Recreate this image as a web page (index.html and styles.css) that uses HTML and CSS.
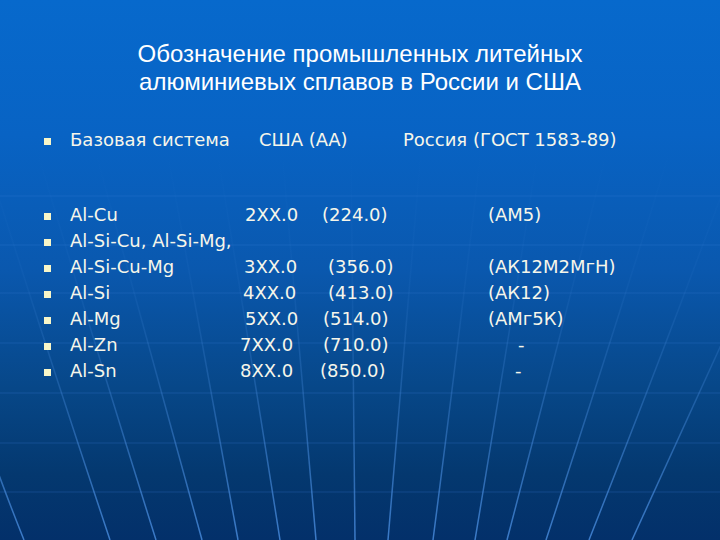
FILE: index.html
```html
<!DOCTYPE html>
<html lang="ru">
<head>
<meta charset="utf-8">
<title>Обозначение промышленных литейных алюминиевых сплавов</title>
<link rel="stylesheet" href="styles.css">
</head>
<body>
<div class="slide">
  <svg class="bg" width="720" height="540" viewBox="0 0 720 540" aria-hidden="true">
    <defs>
      <linearGradient id="fade" gradientUnits="userSpaceOnUse" x1="0" y1="150" x2="0" y2="540">
        <stop offset="0" stop-color="#4a8ee0" stop-opacity="0"/>
        <stop offset="0.35" stop-color="#4a8ee0" stop-opacity="0.08"/>
        <stop offset="0.6" stop-color="#4a8ee0" stop-opacity="0.3"/>
        <stop offset="1" stop-color="#4a8ee0" stop-opacity="0.8"/>
      </linearGradient>
    </defs>
    <g class="hlines">
      <line x1="0" y1="196" x2="720" y2="196"/>
      <line x1="0" y1="245" x2="720" y2="245"/>
      <line x1="0" y1="293" x2="720" y2="293"/>
      <line x1="0" y1="343" x2="720" y2="343"/>
      <line x1="0" y1="393" x2="720" y2="393"/>
      <line x1="0" y1="443" x2="720" y2="443"/>
      <line x1="0" y1="492" x2="720" y2="492"/>
    </g>
    <g class="vlines" stroke="url(#fade)">
      <path d="M-92 150 Q-60 330 24 540"/>
      <path d="M-16 150 Q40 330 110 540"/>
      <path d="M37 150 Q90 330 156 540"/>
      <path d="M95 150 Q145 330 202 540"/>
      <path d="M167 150 Q200 330 238 540"/>
      <path d="M217 150 Q247 330 280 540"/>
      <path d="M282 150 Q298 330 316 540"/>
      <path d="M351 150 Q353 330 355 540"/>
      <path d="M421 150 Q406 330 388 540"/>
      <path d="M481 150 Q460 330 433 540"/>
      <path d="M538 150 Q510 330 475 540"/>
      <path d="M607 150 Q562 330 507 540"/>
      <path d="M670 150 Q615 330 546 540"/>
      <path d="M738 150 Q672 330 589 540"/>
      <path d="M810 150 Q728 330 632 540"/>
    </g>
  </svg>

  <div class="content">
    <h1 class="title">Обозначение промышленных литейных<br>алюминиевых сплавов в России и США</h1>

    <div class="list">
      <div class="row">
        <span class="mark"><i class="sq"></i></span>
        <span class="h1c">Базовая система</span>
        <span class="h2c">США (АА)</span>
        <span class="h3c">Россия (ГОСТ 1583-89)</span>
      </div>

      <div class="group">
        <div class="row">
          <span class="mark"><i class="sq"></i></span>
          <span class="name">Al-Cu</span>
          <span class="code c5">2XX.0</span>
          <span class="aa q2">(224.0)</span>
          <span class="ru">(АМ5)</span>
        </div>
        <div class="row">
          <span class="mark"><i class="sq"></i></span>
          <span class="name wide">Al-Si-Cu, Al-Si-Mg,</span>
        </div>
        <div class="row">
          <span class="mark"><i class="sq"></i></span>
          <span class="name">Al-Si-Cu-Mg</span>
          <span class="code c4">3XX.0</span>
          <span class="aa q8">(356.0)</span>
          <span class="ru">(АК12М2МгН)</span>
        </div>
        <div class="row">
          <span class="mark"><i class="sq"></i></span>
          <span class="name">Al-Si</span>
          <span class="code c3">4XX.0</span>
          <span class="aa q8">(413.0)</span>
          <span class="ru">(АК12)</span>
        </div>
        <div class="row">
          <span class="mark"><i class="sq"></i></span>
          <span class="name">Al-Mg</span>
          <span class="code c5">5XX.0</span>
          <span class="aa q3">(514.0)</span>
          <span class="ru">(АМг5К)</span>
        </div>
        <div class="row">
          <span class="mark"><i class="sq"></i></span>
          <span class="name">Al-Zn</span>
          <span class="code c0">7XX.0</span>
          <span class="aa q3">(710.0)</span>
          <span class="ru dash1">-</span>
        </div>
        <div class="row">
          <span class="mark"><i class="sq"></i></span>
          <span class="name">Al-Sn</span>
          <span class="code c0">8XX.0</span>
          <span class="aa q0">(850.0)</span>
          <span class="ru dash2">-</span>
        </div>
      </div>
    </div>
  </div>
</div>
</body>
</html>
```

FILE: styles.css
```css
* { box-sizing: border-box; }

html, body {
  margin: 0;
  padding: 0;
  background: #03326b;
}

.slide {
  position: relative;
  width: 720px;
  height: 540px;
  overflow: hidden;
  background: linear-gradient(180deg, #0769cc 0%, #0863c4 25%, #0a58ae 50%, #074788 72%, #04386f 88%, #03306a 100%);
}

.bg {
  position: absolute;
  left: 0;
  top: 0;
}

.hlines line {
  stroke: #3f82d6;
  stroke-opacity: 0.18;
  stroke-width: 1.4;
}

.vlines path {
  fill: none;
  stroke-width: 1.5;
}

.content {
  position: relative;
}

.title {
  margin: 0;
  padding-top: 40px;
  text-align: center;
  font-family: "Liberation Sans", Arial, sans-serif;
  font-weight: normal;
  font-size: 24px;
  line-height: 28px;
  color: #ffffff;
}

.list {
  padding-top: 31px;
  font-family: "DejaVu Sans", Verdana, sans-serif;
  font-size: 18px;
  line-height: 26px;
  color: #f6f6ea;
}

.group {
  margin-top: 49px;
}

.row {
  display: flex;
  height: 26px;
  white-space: nowrap;
}

.mark {
  width: 70px;
  padding-left: 44px;
}

.sq {
  display: inline-block;
  width: 7px;
  height: 7px;
  margin-bottom: 1px;
  background: #f8f6c8;
  vertical-align: baseline;
}

.h1c { width: 189px; }
.h2c { width: 144px; }

.name { width: 170px; }
.name.wide { width: auto; }
.code { width: 80px; }
.aa { width: 168px; }

.c0 { padding-left: 0; }
.c3 { padding-left: 3px; }
.c4 { padding-left: 4px; }
.c5 { padding-left: 5px; }

.q0 { padding-left: 0; }
.q2 { padding-left: 2px; }
.q3 { padding-left: 3px; }
.q8 { padding-left: 8px; }

.dash1 { padding-left: 30px; }
.dash2 { padding-left: 27px; }
```
